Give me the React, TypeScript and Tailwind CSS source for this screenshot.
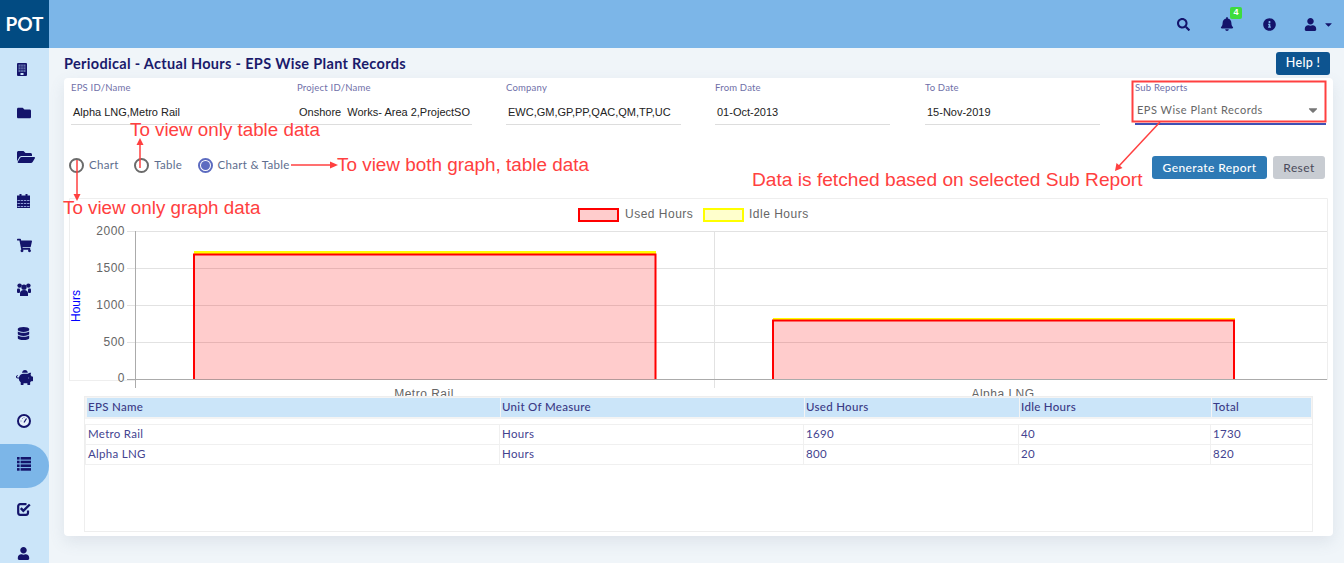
import {
  FaBell,
  FaCaretDown,
  FaDatabase,
  FaFolder,
  FaFolderOpen,
  FaInfoCircle,
  FaPiggyBank,
  FaSearch,
  FaShoppingCart,
  FaUser,
} from "react-icons/fa";

const BuildingIcon = () => (
  <svg width="10" height="13" viewBox="0 0 10 13">
    <rect width="10" height="13" rx="1" fill="#14146b" />
    <rect x="1.5" y="1.5" width="7" height="7.5" fill="#5f6fa8" />
    <path d="M3.8 1.5V9M6.2 1.5V9M1.5 4H8.5M1.5 6.5H8.5" stroke="#14146b" strokeWidth="0.6" />
    <rect x="3.5" y="10" width="3" height="2" fill="#cbe5f9" />
  </svg>
);

const CalendarIcon = () => (
  <svg width="13" height="14" viewBox="0 0 13 14">
    <rect y="1.5" width="13" height="12.5" fill="#14146b" />
    <rect x="2.5" width="2" height="3" fill="#14146b" />
    <rect x="8.5" width="2" height="3" fill="#14146b" />
    <path d="M0.5 6.5H12.5M0.5 9.5H12.5M0.5 12.5H12.5" stroke="#8f9fd8" strokeWidth="1" strokeDasharray="2.4 0.8" />
  </svg>
);

const UsersIcon = () => (
  <svg width="14" height="13" viewBox="0 0 14 13" fill="#14146b">
    <circle cx="2.6" cy="2.6" r="2.2" />
    <circle cx="11.4" cy="2.6" r="2.2" />
    <circle cx="7" cy="4.2" r="2.6" />
    <path d="M3 13V10.5A4 3.5 0 0 1 11 10.5V13Z" />
    <rect y="5.5" width="3" height="4.5" rx="1" />
    <rect x="11" y="5.5" width="3" height="4.5" rx="1" />
  </svg>
);

const GaugeIcon = () => (
  <svg width="14" height="14" viewBox="0 0 14 14">
    <circle cx="7" cy="7" r="6" fill="#e6f1fb" stroke="#14146b" strokeWidth="2" />
    <path d="M7 8.5L9.5 4.5" stroke="#14146b" strokeWidth="1.2" />
    <path d="M3.5 7H4.5M5 4.5H5.8M7 3.2V4" stroke="#5f6fa8" strokeWidth="0.9" />
  </svg>
);

const ListIcon = () => (
  <svg width="14" height="14" viewBox="0 0 14 14" fill="#14146b">
    {[0, 3.7, 7.4, 11.1].map((y) => (
      <g key={y}>
        <rect y={y} width="2.6" height="2.6" />
        <rect x="3.6" y={y} width="10.4" height="2.6" />
      </g>
    ))}
  </svg>
);

const CheckIcon = () => (
  <svg width="14" height="13" viewBox="0 0 14 13" fill="none" stroke="#14146b">
    <path d="M9.5 1.2H3.2A2 2 0 0 0 1.2 3.2V9.8A2 2 0 0 0 3.2 11.8H9A2 2 0 0 0 11 9.8V7.5" strokeWidth="2.2" />
    <path d="M3.8 5.2L6.3 7.8L12.8 1.5" strokeWidth="2.4" />
  </svg>
);

const navIcons = [
  <BuildingIcon />,
  <FaFolder size={14} />,
  <FaFolderOpen size={18} />,
  <CalendarIcon />,
  <FaShoppingCart size={15} />,
  <UsersIcon />,
  <FaDatabase size={13} />,
  <FaPiggyBank size={17} className="-ml-[1px]" />,
  <GaugeIcon />,
  <ListIcon />,
  <CheckIcon />,
  <FaUser size={13} />,
];

const fields = [
  { label: "EPS ID/Name", value: "Alpha LNG,Metro Rail", width: "w-[226px]", gap: "mr-0" },
  { label: "Project ID/Name", value: "Onshore  Works- Area 2,ProjectSO", width: "w-[175px]", gap: "mr-[34px]" },
  { label: "Company", value: "EWC,GM,GP,PP,QAC,QM,TP,UC", width: "w-[175px]", gap: "mr-[34px]" },
  { label: "From Date", value: "01-Oct-2013", width: "w-[175px]", gap: "mr-[35px]" },
  { label: "To Date", value: "15-Nov-2019", width: "w-[175px]", gap: "mr-[35px]" },
];

const rows = [
  ["Metro Rail", "Hours", "1690", "40", "1730"],
  ["Alpha LNG", "Hours", "800", "20", "820"],
];

const heads = ["EPS Name", "Unit Of Measure", "Used Hours", "Idle Hours", "Total"];

const Radio = ({ label, checked }: { label: string; checked?: boolean }) => (
  <label className="flex items-center gap-[5px]">
    {checked ? (
      <span className="flex h-[15px] w-[15px] items-center justify-center rounded-full border-2 border-[#5c6bc0]">
        <span className="h-[9px] w-[9px] rounded-full bg-[#5c6bc0]" />
      </span>
    ) : (
      <span className="h-[15px] w-[15px] rounded-full border-2 border-[#6b6b6b]" />
    )}
    <span className="text-[11.5px] tracking-[0.3px] text-[#5d6d8e]">{label}</span>
  </label>
);

const Chart = () => (
  <svg viewBox="69 198 1259 198" className="block h-[198px] w-[1259px]">
    <path d="M69.5 380V198.5H1327.5V380" fill="none" stroke="#eeeeee" />
    <path d="M69 380.5H135" stroke="#eeeeee" />
    <path d="M127 231.5H1327M127 268.5H1327M127 305.5H1327M127 342.5H1327M714.5 231V388" stroke="#e2e2e2" />
    <path d="M135.5 231V388M127 379.5H1327" stroke="#ababab" strokeWidth="1" />

    <rect x="194" y="251" width="462" height="3" fill="#ffff00" />
    <rect x="194.5" y="254.5" width="461" height="125" fill="#ff0000" fillOpacity="0.2" />
    <path d="M194 379V254.5H655.5V379" fill="none" stroke="#ff0000" strokeWidth="2" />
    <rect x="773" y="318" width="462" height="3" fill="#ffff00" />
    <rect x="773.5" y="321" width="461" height="58" fill="#ff0000" fillOpacity="0.2" />
    <path d="M773 379V320.5H1234V379" fill="none" stroke="#ff0000" strokeWidth="2" />

    <rect x="579" y="209" width="39" height="12" fill="#ffcccc" stroke="#ff0000" strokeWidth="2" />
    <rect x="704" y="209" width="39" height="12" fill="#ffffcc" stroke="#ffff00" strokeWidth="2" />
    <g fontFamily="'Liberation Sans', sans-serif" fontSize="12" fill="#666666" letterSpacing="0.5">
      <text x="625" y="218">Used Hours</text>
      <text x="749" y="218">Idle Hours</text>
      <text x="125" y="235" textAnchor="end">2000</text>
      <text x="125" y="272" textAnchor="end">1500</text>
      <text x="125" y="309" textAnchor="end">1000</text>
      <text x="125" y="346" textAnchor="end">500</text>
      <text x="125" y="382" textAnchor="end">0</text>
      <text x="424" y="398" textAnchor="middle">Metro Rail</text>
      <text x="1003" y="398" textAnchor="middle">Alpha LNG</text>
    </g>
    <text
      x="0"
      y="0"
      transform="translate(80 322) rotate(-90)"
      fontFamily="'Liberation Sans', sans-serif"
      fontSize="12"
      fill="#0000ff"
    >
      Hours
    </text>
  </svg>
);

const Notes = () => (
  <>
    <svg className="pointer-events-none absolute left-0 top-0 h-[563px] w-[1344px]" viewBox="0 0 1344 563">
      <g stroke="#ff4040" strokeWidth="1.5" fill="#ff4040">
        <path d="M77 160V196" />
        <path d="M73.5 194L77 201L80.5 194Z" stroke="none" />
        <path d="M140 168V142" />
        <path d="M136.5 145L140 138L143.5 145Z" stroke="none" />
        <path d="M291 165H332" />
        <path d="M330 161.5L338 165L330 168.5Z" stroke="none" />
        <path d="M1160 122L1119 166" />
        <path d="M1116.5 163L1115 171L1122.5 168Z" stroke="none" />
        <rect x="1132.5" y="81.5" width="193" height="40" fill="none" strokeWidth="2" />
      </g>
    </svg>
    <span className="absolute left-[130px] top-[118px] text-[18.8px] leading-[24px] text-[#ff4040]">
      To view only table data
    </span>
    <span className="absolute left-[337px] top-[153px] text-[18.9px] leading-[24px] text-[#ff4040]">
      To view both graph, table data
    </span>
    <span className="absolute left-[63px] top-[196px] text-[18.8px] leading-[24px] text-[#ff4040]">
      To view only graph data
    </span>
    <span className="absolute left-[752px] top-[168px] text-[19.15px] leading-[24px] text-[#ff4040]">
      Data is fetched based on selected Sub Report
    </span>
  </>
);

const App = () => {
  return (
    <div className="relative flex h-[563px] w-[1344px] overflow-hidden bg-[#f0f5f9] font-['Liberation_Sans',sans-serif]">
      <aside className="flex h-full w-[49px] shrink-0 flex-col overflow-hidden bg-[#cbe5f9]">
        <div className="flex h-[48px] shrink-0 items-center justify-center bg-[#024b82] font-['Lato',sans-serif] text-[19px] font-bold text-white">
          POT
        </div>
        <nav className="-mt-px flex flex-col">
          {navIcons.map((icon, i) =>
            i === 9 ? (
              <div
                key={i}
                className="flex h-[44px] shrink-0 translate-y-px items-center rounded-r-[22px] bg-[#7cb6e8] pl-[17px] text-[#14146b]"
              >
                <span className="-translate-y-[2px]">{icon}</span>
              </div>
            ) : (
              <div key={i} className="flex h-[44px] shrink-0 items-center pl-[17px] text-[#14146b]">
                {icon}
              </div>
            ),
          )}
        </nav>
      </aside>

      <div className="flex min-w-0 flex-1 flex-col">
        <header className="flex h-[48px] shrink-0 items-center justify-end bg-[#7cb6e8] pr-[10px] text-[#14146b]">
          <FaSearch size={13} className="mr-[30px]" />
          <div className="relative mr-[29px]">
            <FaBell size={14} />
            <span className="absolute left-[10px] top-[-10px] flex h-[12px] w-[12px] items-center justify-center rounded-[2px] bg-[#3ddc3d] text-[9px] font-bold text-white">
              4
            </span>
          </div>
          <FaInfoCircle size={13} className="mr-[28px]" />
          <FaUser size={13} className="mr-[6px]" />
          <FaCaretDown size={11} />
        </header>

        <main className="flex-1 pl-[15px] pr-[11px] font-['Lato',sans-serif]">
          <div className="flex h-[30px] items-center justify-between pr-[3px]">
            <h1 className="mt-[2px] text-[14.5px] font-bold tracking-[0.32px] text-[#1a1a6b]">
              Periodical - Actual Hours - EPS Wise Plant Records
            </h1>
            <button className="mt-[1px] h-[23px] w-[54px] rounded-[3px] bg-[#0d5490] text-[12.5px] font-medium tracking-[0.3px] text-white">
              Help !
            </button>
          </div>

          <section className="h-[458px] rounded-[4px] bg-white px-[5px] pt-[3px] shadow-[0_6px_16px_rgba(90,110,130,0.12)]">
            <div className="ml-[2px] flex h-[44px]">
              {fields.map((f) => (
                <div key={f.label} className={`${f.width} ${f.gap} h-[44px] border-b border-[#dddddd] pt-px`}>
                  <div className="text-[9.5px] leading-[12px] tracking-[0.2px] text-[#6f6fa8]">{f.label}</div>
                  <div className="mt-[11px] whitespace-pre pl-[2px] font-['Liberation_Sans',sans-serif] text-[11px] leading-[14px] text-[#222222]">
                    {f.value}
                  </div>
                </div>
              ))}
              <div className="h-[44px] w-[191px] border-b-2 border-[#3f51b5] pt-px">
                <div className="text-[9.5px] leading-[12px] tracking-[0.2px] text-[#6f6fa8]">Sub Reports</div>
                <div className="mt-[9px] flex items-center justify-between pl-[2px] pr-[6px] text-[11px] leading-[14px] tracking-[0.5px] text-[#666666]">
                  <span>EPS Wise Plant Records</span>
                  <FaCaretDown size={14} className="text-[#777777]" />
                </div>
              </div>
            </div>

            <div className="mt-[31px] flex h-[23px] items-center justify-between pr-[3px]">
              <div className="flex items-center gap-[15.5px] pb-[5px]">
                <Radio label="Chart" />
                <Radio label="Table" />
                <Radio label="Chart & Table" checked />
              </div>
              <div className="flex gap-[6px]">
                <button className="h-[23px] w-[115px] rounded-[3px] bg-[#2e7ab5] text-[12px] font-medium tracking-[0.4px] text-white">
                  Generate Report
                </button>
                <button className="h-[23px] w-[52px] rounded-[3px] bg-[#c8ccd2] text-[12px] tracking-[0.4px] text-[#4a4a5a]">
                  Reset
                </button>
              </div>
            </div>

            <div className="mt-[19px] h-[198px] overflow-hidden">
              <Chart />
            </div>

            <div className="ml-[15px] h-[136px] w-[1229px] border border-[#eeeeee]">
              <table className="w-full table-fixed border-separate border-spacing-0 text-[11.5px] leading-[14px] tracking-[0.3px]">
                <colgroup>
                  <col className="w-[415px]" />
                  <col className="w-[304px]" />
                  <col className="w-[215px]" />
                  <col className="w-[192px]" />
                  <col />
                </colgroup>
                <thead>
                  <tr>
                    {heads.map((h) => (
                      <th
                        key={h}
                        className="h-[20px] border-l border-t border-[#f4f4f4] bg-[#cbe5f9] bg-clip-padding pb-[2px] pl-[1px] text-left font-medium text-[#3a3a85] first:border-l-2 first:pl-[1px] last:border-r"
                      >
                        {h}
                      </th>
                    ))}
                  </tr>
                  <tr>
                    <td colSpan={5} className="h-[7px] border-t-[2px] border-[#f4f4f4]" />
                  </tr>
                </thead>
                <tbody>
                  {rows.map((row) => (
                    <tr key={row[0]}>
                      {row.map((c, i) => (
                        <td
                          key={i}
                          className="h-[20px] border-r border-t border-[#f0f0f0] pb-[2px] pl-[2px] text-[#43438f] first:border-l last:border-r-0"
                        >
                          {c}
                        </td>
                      ))}
                    </tr>
                  ))}
                  <tr>
                    <td colSpan={5} className="h-0 border-t border-[#f0f0f0]" />
                  </tr>
                </tbody>
              </table>
            </div>
          </section>
        </main>
      </div>

      <Notes />
    </div>
  );
};

export default App;
